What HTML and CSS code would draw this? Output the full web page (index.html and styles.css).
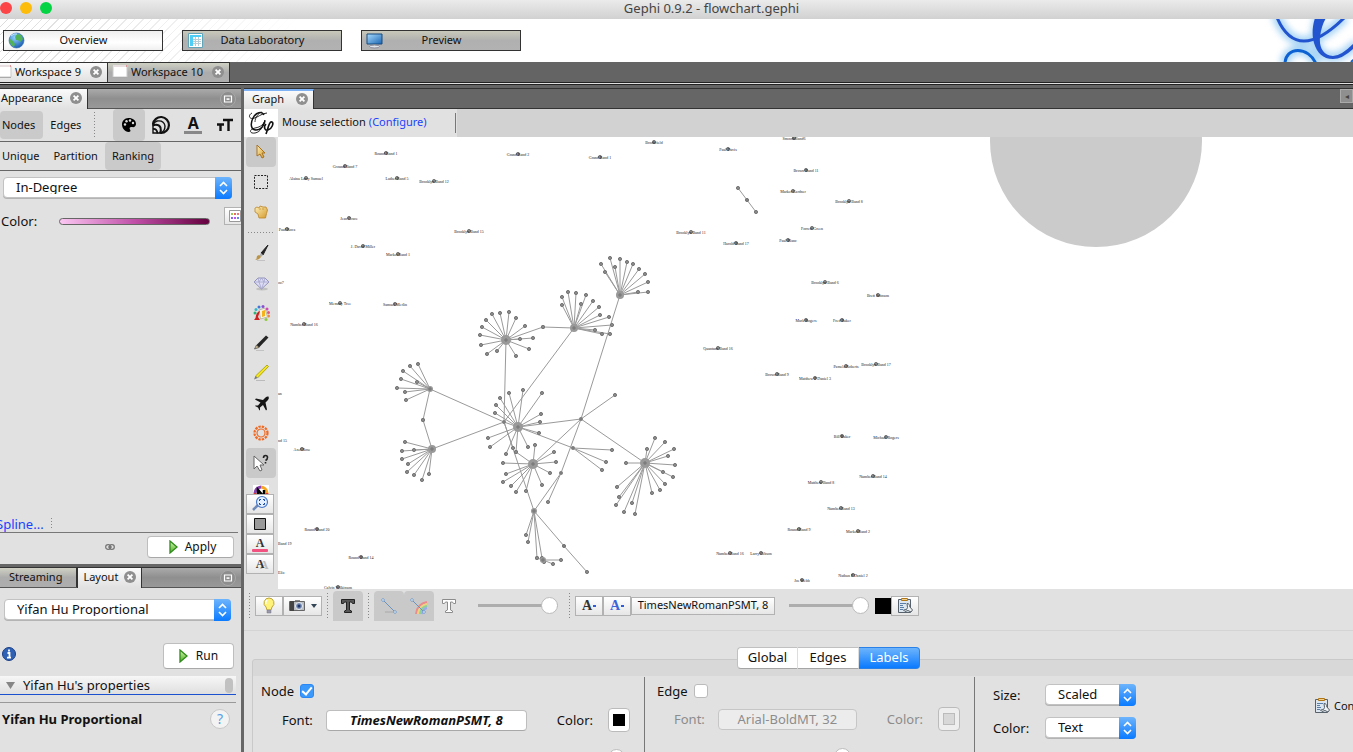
FILE: index.html
```html
<!DOCTYPE html>
<html lang="en">
<head>
<meta charset="utf-8">
<title>Gephi 0.9.2 - flowchart.gephi</title>
<link rel="stylesheet" href="styles.css">
</head>
<body>
<svg class="sprite" aria-hidden="true">
  <defs>
    <linearGradient id="gold" x1="0" y1="0" x2="1" y2="1"><stop offset="0" stop-color="#fff0b8"/><stop offset="1" stop-color="#d39a2c"/></linearGradient>
    <linearGradient id="green" x1="0" y1="0" x2="0" y2="1"><stop offset="0" stop-color="#d6f5b4"/><stop offset="1" stop-color="#4caf1e"/></linearGradient>
    <radialGradient id="globe" cx=".4" cy=".3" r=".8"><stop offset="0" stop-color="#8fd3ff"/><stop offset="1" stop-color="#0f4fa8"/></radialGradient>
    <linearGradient id="screen" x1="0" y1="0" x2="1" y2="1"><stop offset="0" stop-color="#a9dcff"/><stop offset="1" stop-color="#1b66b3"/></linearGradient>
  </defs>
  <symbol id="close" viewBox="0 0 12 12"><circle cx="6" cy="6" r="6" fill="#8f8f8f"/><path d="M3.6 3.6l4.8 4.8M8.4 3.6L3.6 8.4" stroke="#fff" stroke-width="1.8"/></symbol>
  <symbol id="minimize" viewBox="0 0 16 16"><circle cx="8" cy="8" r="7.5" fill="#8d8d8d" stroke="#a8a8a8"/><path d="M4.5 5h7v6h-7z" fill="none" stroke="#fff" stroke-width="1.2"/><path d="M6.5 7.3h3v1.6h-3z" fill="#fff"/></symbol>
  <symbol id="sheet" viewBox="0 0 16 14"><path d="M1 1h14v11H1z" fill="#fff" stroke="#c9c9c9"/><path d="M1 1h14" stroke="#e8e0e0" stroke-width="2"/><path d="M14 1h1" stroke="#c55" stroke-width="1"/><path d="M1 12.5h14" stroke="#aaa"/></symbol>
  <symbol id="play" viewBox="0 0 9 14"><path d="M1 1v12l7-6z" fill="url(#green)" stroke="#2e8b1a" stroke-width="1.3"/></symbol>
  <symbol id="stepper" viewBox="0 0 17 21"><path d="M5 8.5L8.5 5 12 8.5M5 12.5L8.5 16 12 12.5" fill="none" stroke="#fff" stroke-width="1.6"/></symbol>
  <symbol id="clip" viewBox="0 0 17 17"><path d="M1.500 2.500h12v13h-12z" fill="#dbe6f0" stroke="#56616b"/><path d="M3 6.500h6M3 8.500h3M3 10.500h4M3 12.500h3" stroke="#587da6"/><path d="M4.500 3.500v-2h6v2z" fill="#f3d18c" stroke="#b07616"/><path d="M10 6.500c2 0 3 1.500 2.500 3l3 3.500-1.500 2-3-1.500-3 1-1.500-1.500 3-.5 1-2z" fill="#eef2f5" stroke="#555e66"/></symbol>
</svg>

<div class="app">
  <header class="titlebar">
    <span class="lights"><i class="light red"></i><i class="light amber"></i><i class="light lime"></i></span>
    <h1>Gephi 0.9.2 - flowchart.gephi</h1>
  </header>

  <nav class="banner">
    <button class="view current"><svg width="17" height="17" viewBox="0 0 17 17"><circle cx="8.500" cy="8.500" r="7.500" fill="url(#globe)" stroke="#2b6cae" stroke-width=".6"/><path d="M9 2l4 1 2 4-3 3-2-2-2 0-1-3zM2 7l3 2 2 3-1 3-3-2-1.500-4z" fill="#52b356"/><path d="M3 4q3-3 6-2" stroke="#c4e9ff" fill="none"/></svg><span>Overview</span></button>
    <button class="view"><svg width="17" height="17" viewBox="0 0 17 17"><path d="M1.500 1.500h14v14h-14z" fill="#fff" stroke="#62a4b8"/><path d="M3 3h11v2H3zM3 5h3v9H3z" fill="#4fcdf5"/><path d="M6 7.500h8M6 9.500h8M6 11.500h8M8.500 5v9M11.500 5v9" stroke="#b6cdd5"/></svg><span>Data Laboratory</span></button>
    <button class="view"><svg width="17" height="17" viewBox="0 0 17 17"><path d="M1 2h15v10H1z" fill="url(#screen)" stroke="#174c80"/><path d="M7 12h3v2H7z" fill="#788"/><ellipse cx="8.500" cy="14.500" rx="5" ry="1.500" fill="#dfe5ea" stroke="#889"/></svg><span>Preview</span></button>
    <svg class="brand" width="90" height="43" viewBox="0 0 90 43">
      <defs><filter id="glow" x="-30%" y="-50%" width="160%" height="200%"><feGaussianBlur stdDeviation="3"/></filter></defs>
      <g fill="none" stroke="#8ec8f2" stroke-width="10" filter="url(#glow)" opacity=".75"><path d="M13-4C20 14 30 22 41 22S66 14 82-2M57-4C48 20 52 38 70 38q10 0 24-14M22 46c0-20 28-20 31 0"/></g>
      <path d="M13-4C20 14 30 22 41 22S66 14 82-2" fill="none" stroke="#2354cf" stroke-width="3"/>
      <path d="M52-1C49 8 49 17 51 24 54 34 60 40 70 40q10 0 22-12l-2-3Q78 37 70 37C60 36 56 28 57 18 58 10 60 4 63-1z" fill="#2354cf"/>
      <path d="M22 45c0-18 24-18 31 0" fill="none" stroke="#0c62d3" stroke-width="3"/>
      <path d="M88 43q2-2 4-3" fill="none" stroke="#0c62d3" stroke-width="2"/>
    </svg>
  </nav>

  <nav class="workspaces">
    <button class="tab current first"><svg width="12" height="14" viewBox="4 0 12 14"><use href="#sheet" width="16" height="14"/></svg>Workspace 9<svg class="x" width="12" height="12"><use href="#close"/></svg></button>
    <button class="tab"><svg width="16" height="14"><use href="#sheet"/></svg>Workspace 10<svg class="x" width="12" height="12"><use href="#close"/></svg></button>
  </nav>

  <div class="main">
    <aside class="side">
      <section class="appearance">
        <div class="tabs">
          <button class="tab current">Appearance<svg class="x" width="12" height="12"><use href="#close"/></svg></button>
          <button class="mini" aria-label="Minimize Appearance"><svg width="16" height="16"><use href="#minimize"/></svg></button>
        </div>
        <div class="row kinds">
          <button class="flat on">Nodes</button><button class="flat">Edges</button>
          <i class="dots"></i>
          <button class="flat icon on" aria-label="Color"><svg width="16" height="16" viewBox="0 0 16 16"><path d="M7.500 1C3.500 1 1 4 1 7.500S4 15 7.500 15c2 0 2.500-1 1.500-2.500s0-3 2-2.500 4-.5 4-3C15 3.500 12 1 7.500 1z"/><g fill="#ddd"><circle cx="4" cy="7.500" r="1.200"/><circle cx="5.500" cy="4.300" r="1.200"/><circle cx="9" cy="3.500" r="1.200"/><circle cx="12" cy="6" r="1.200"/></g></svg></button>
          <button class="flat icon" aria-label="Size"><svg width="20" height="20" viewBox="0 0 20 20" fill="none" stroke="#111"><path d="M2 9A8 8 0 1 1 10 18" stroke-width="2.200"/><path d="M1.500 10.500q6-2 8 2 1 3-.5 6" stroke-width="2"/><path d="M2 14q4-.5 4.500 4.500" stroke-width="1.800"/><path d="M2 8v10h8" stroke-width="1.400"/><path d="M2 10q1-3 4-4 7-1 8 5 0 5-4 7" stroke-width="1.400"/></svg></button>
          <button class="flat icon letter" aria-label="Label Color">A</button>
          <button class="flat icon" aria-label="Label Size"><svg width="16" height="14" viewBox="0 0 16 14"><path d="M6 2h10M11.500 2v11M0 6.500h7M3.500 6.500V13" fill="none" stroke="#111" stroke-width="2.400"/></svg></button>
        </div>
        <div class="row modes">
          <button class="flat">Unique</button><button class="flat">Partition</button><button class="flat on">Ranking</button>
        </div>
        <div class="rank">
          <label class="combo"><select aria-label="Ranking attribute"><option>In-Degree</option></select><svg width="17" height="21"><use href="#stepper"/></svg></label>
          <div class="ramp"><span>Color:</span><i class="gradient"></i><button class="box palette" aria-label="Palette"><svg width="12" height="12" viewBox="0 0 12 12"><path d="M.5.5h11v11H.5z" fill="#fff" stroke="#999"/><path d="M2 3h2v2H2z" fill="#9c5"/><path d="M5 3h2v2H5z" fill="#e66"/><path d="M8 3h2v2H8z" fill="#e77"/><path d="M2 7h2v2H2z" fill="#86d"/><path d="M5 7h2v2H5z" fill="#b5e"/><path d="M8 7h2v2H8z" fill="#68e"/></svg></button></div>
        </div>
        <div class="spline"><a href="#spline">Spline...</a><i class="dots"></i></div>
        <div class="apply">
          <svg width="10" height="6" viewBox="0 0 10 6"><rect x=".7" y=".7" width="5" height="4.600" rx="2.300" fill="none" stroke="#777" stroke-width="1.300"/><rect x="4.300" y=".7" width="5" height="4.600" rx="2.300" fill="none" stroke="#777" stroke-width="1.300"/><path d="M3 3h4" stroke="#777"/></svg>
          <button class="push"><svg width="9" height="14"><use href="#play"/></svg>Apply</button>
        </div>
      </section>
      <section class="layout">
        <div class="tabs">
          <button class="tab stream">Streaming</button><button class="tab current lay">Layout<svg class="x" width="12" height="12"><use href="#close"/></svg></button>
          <button class="mini" aria-label="Minimize Layout"><svg width="16" height="16"><use href="#minimize"/></svg></button>
        </div>
        <label class="combo"><select aria-label="Layout algorithm"><option>Yifan Hu Proportional</option></select><svg width="17" height="21"><use href="#stepper"/></svg></label>
        <div class="runrow">
          <svg width="14" height="14" viewBox="0 0 14 14"><circle cx="7" cy="7" r="6.500" fill="#2f62b5" stroke="#1b3f86"/><path d="M7 2.500v2M5.500 6h2v4.500M5 10.700h4" stroke="#fff" stroke-width="1.800" fill="none"/></svg>
          <button class="push run"><svg width="9" height="14"><use href="#play"/></svg>Run</button>
        </div>
        <div class="props"><button class="prophead"><svg width="9" height="7" viewBox="0 0 9 7"><path d="M0 0h9L4.500 7z" fill="#868686"/></svg>Yifan Hu's properties</button><i class="thumb"></i></div>
        <div class="about"><strong>Yifan Hu Proportional</strong><button class="help" aria-label="Help">?</button></div>
      </section>
    </aside>

    <section class="graph">
      <div class="tabs dark">
        <button class="tab current">Graph<svg class="x" width="12" height="12"><use href="#close"/></svg></button>
        <button class="scroll" aria-label="Scroll tabs">◂</button>
      </div>
      <div class="selection">
        <svg class="gp" width="34" height="28" viewBox="0 0 34 28" fill="none" stroke="#111"><path d="M20 6C18 2 12 3 9 9s-2 12 3 12 8-5 9-9" stroke-width="1.500"/><path d="M8 4C4 6 5 10 9 9.500S18 4 23 4" stroke-width=".9"/><path d="M18 3c-4 1-7 6-7 10" stroke-width=".8"/><path d="M21 11c-2 6-4 12-10 13s-6-4 0-5 9-4 10-8" stroke-width=".9"/><path d="M22 15c-3 3-1 7 2 6 4-1 6-7 4-8-3-1-4 7-6 12" stroke-width="1.600"/></svg>
        <span>Mouse selection</span><a href="#configure">(Configure)</a><i class="bar"></i>
      </div>
      <div class="stage">
        <div class="tools">
          <div class="toollist">
            <button class="tool on" aria-label="Select"><svg width="10" height="16" viewBox="0 0 10 16"><path d="M1 1v11l3-2 2 4 2-1-2-4h3z" fill="url(#gold)" stroke="#a87321"/></svg></button>
            <button class="tool" aria-label="Rectangle selection"><svg width="16" height="16" viewBox="0 0 16 16"><path d="M1.500 1.500h13v13h-13z" fill="none" stroke="#222" stroke-dasharray="2 1.250"/></svg></button>
            <button class="tool" aria-label="Drag"><svg width="16" height="16" viewBox="0 0 16 16"><path d="M2 6V4l2-1 2 1 1-2 3 1 3 0 1.500 3-1 3.500-1 4.500H6l-1-4-3-2z" fill="url(#gold)" stroke="#bb8425" stroke-width=".8"/><path d="M7 4v2M10 4v2" stroke="#bb8425" stroke-width=".6"/></svg></button>
            <i class="hdots"></i>
            <button class="tool" aria-label="Painter"><svg width="18" height="18" viewBox="0 0 18 18"><path d="M5 16.500h8" stroke="#c2c2c2"/><path d="M16 1l-5 10-2-2z" fill="#222" stroke="#222"/><path d="M9 9l2 2-2 2-2-1z" fill="#aaa"/><path d="M7 11l2 2q-2 3-6 3 2-1 2-4z" fill="#bb9446"/></svg></button>
            <button class="tool" aria-label="Sizer"><svg width="17" height="17" viewBox="0 0 17 17"><ellipse cx="9" cy="14" rx="6" ry="1.500" fill="#aaa" opacity=".6"/><path d="M5 3h7l4 4-7.500 7L1 7z" fill="#dcdcf5" stroke="#9292ba"/><path d="M1 7h15M5 3l1 4 2.500 7L11 7l1-4M6 7l2.500-4L11 7" fill="none" stroke="#a4a4cc" stroke-width=".8"/></svg></button>
            <button class="tool" aria-label="Brush"><svg width="17" height="17" viewBox="0 0 17 17"><g stroke="none"><circle cx="2" cy="8" r="1.500" fill="#2db37a"/><circle cx="3" cy="4.500" r="1.500" fill="#35b7c9"/><circle cx="6" cy="2" r="1.500" fill="#4573d8"/><circle cx="10" cy="1.500" r="1.500" fill="#8a4fd0"/><circle cx="14" cy="4" r="1.500" fill="#d24bb7"/><circle cx="15.500" cy="7.500" r="1.500" fill="#e4557c"/><circle cx="15.500" cy="11" r="1.500" fill="#ea8a3c"/><circle cx="13" cy="14.500" r="1.500" fill="#8fc93c"/></g><path d="M6 5l6-2 2.500 9-7 2z" fill="#faf4de" stroke="#bba"/><path d="M9 6l3-1v6l-3 1z" fill="#f4b21e"/><path d="M7 6Q3 7 2.500 13L1 15h6l-2-3z" fill="#cf2020"/></svg></button>
            <button class="tool" aria-label="Node pencil"><svg width="18" height="18" viewBox="0 0 18 18"><path d="M4 16.500h8" stroke="#c2c2c2"/><path d="M4.500 11L14 1.500l2.500 2L7 13.500z" fill="#252525"/><path d="M4.500 11L7 13.500 2.500 15z" fill="#cdbd95" stroke="#333" stroke-width=".6"/></svg></button>
            <button class="tool" aria-label="Edge pencil"><svg width="18" height="18" viewBox="0 0 18 18"><path d="M4 16.500h9" stroke="#bbb"/><path d="M3.500 12L15 1l1.500 1.500L5.500 14z" fill="#f4e51c" stroke="#a39a0c" stroke-width=".8"/><path d="M3.500 12l2 2-3.500 1.500z" fill="#777"/></svg></button>
            <button class="tool" aria-label="Shortest path"><svg width="17" height="17" viewBox="0 0 17 17"><path d="M15.500 1.500q-1.500-.5-3 1L10 5 3 3.500 2 4.500 7.500 7.500 5 10.500 2.500 10.500 2 11l3 1.500L6.500 15.500l.5-.5V12.500L10 10l3 5.500 1-1L12.500 7.500 15 5q1.500-2 .5-3.500z" fill="#151515"/></svg></button>
            <button class="tool" aria-label="Heat map"><svg width="16" height="16" viewBox="0 0 16 16" fill="none" stroke="#f06a24"><circle cx="8" cy="8" r="6.500" stroke-width="2.200" stroke-dasharray="2.400 1"/><circle cx="8" cy="8" r="4" stroke-width="1.200"/></svg></button>
            <button class="tool on" aria-label="Edit"><svg width="18" height="18" viewBox="0 0 18 18"><path d="M2 2v13l3-3 3 5 2-1-2-5h4z" fill="#fff" stroke="#666"/><path d="M11.500 4q0-2.500 2-2.500T15.500 3.500 13.500 6.500M13.500 8v1.500" fill="none" stroke="#222" stroke-width="1.600"/></svg></button>
            <button class="tool" aria-label="Neighbours"><svg width="16" height="16" viewBox="0 0 16 16"><path d="M0 0h16v16H0z" fill="#fff"/><path d="M2 8a6.500 6.500 0 0 1 6-6" stroke="#8b3fb0" stroke-width="3" fill="none"/><path d="M8 2a6.500 6.500 0 0 1 6 6" stroke="#f5a623" stroke-width="3" fill="none"/><path d="M14 8a6 6 0 0 1-12 0" stroke="#d33" stroke-width="3" fill="none"/><path d="M5 12V5l6 7V5" stroke="#000" stroke-width="2.500" fill="none"/></svg></button>
          </div>
          <div class="boxes">
            <button class="box" aria-label="Center on graph"><svg width="18" height="18" viewBox="0 0 18 18"><path d="M7 10l-5 5" stroke="#6f8bb8" stroke-width="2.500"/><circle cx="11" cy="7" r="5.500" fill="#e4efff" stroke="#4878c9" stroke-width="1.200"/><path d="M8.500 6V4.500H10M12 4.500h1.500V6M13.500 8v1.500H12M10 9.500H8.500V8" fill="none" stroke="#1444a9"/></svg></button>
            <button class="box" aria-label="Reset colors"><svg width="12" height="12" viewBox="0 0 12 12"><path d="M.5.5h11v11H.5z" fill="#999" stroke="#111"/></svg></button>
            <button class="box ul" aria-label="Reset label colors">A</button>
            <button class="box sh" aria-label="Reset label visibility">A</button>
          </div>
        </div>
        <svg class="canvas" id="canvas" viewBox="278 137 1075 452" preserveAspectRatio="xMinYMin slice" role="img" aria-label="Graph"></svg>
      </div>

      <div class="vizbar">
        <i class="dots"></i>
        <div class="group"><button class="box bulb" aria-label="Background"><svg width="14" height="18" viewBox="0 0 14 18"><path d="M7 1a5 5 0 0 0-3 9l1 3h4l1-3a5 5 0 0 0-3-9z" fill="#fff27b" stroke="#c0a63a"/><path d="M5 3q-2 2-1 4" stroke="#fff" stroke-width="1.500" fill="none"/><path d="M5 13h4v3H5z" fill="#99a" stroke="#778" stroke-width=".5"/></svg></button><button class="box camera" aria-label="Screenshot"><svg width="16" height="13" viewBox="0 0 16 13"><path d="M.5 2.500h15v9H.5z" fill="#b9bdc2" stroke="#666"/><path d="M1 2h4v10H1z" fill="#444"/><path d="M6 1h5v1H6z" fill="#888"/><circle cx="10" cy="7" r="3.500" fill="#6f86b0" stroke="#eee"/><circle cx="10" cy="7" r="1.500" fill="#203467"/></svg><span class="caret"></span></button></div>
        <i class="dots"></i>
        <button class="sq on" aria-label="Node labels"><svg width="16" height="16" viewBox="0 0 16 16"><path d="M1.500 1.500h13v4h-2l-1-1.500h-2v8l2 1v1.500h-7V13l2-1V4h-2l-1 1.500h-2z" fill="#555" stroke="#222"/></svg></button>
        <i class="dots"></i>
        <div class="group"><button class="sq on" aria-label="Show edges"><svg width="18" height="18" viewBox="0 0 18 18"><path d="M5 15h9" stroke="#b9b9b9" stroke-width="2"/><path d="M3 3l12 12" stroke="#6b93bd"/><circle cx="3" cy="3" r="1.300" fill="#fff" stroke="#5f8fc3" stroke-width=".8"/><circle cx="15" cy="15" r="1.300" fill="#fff" stroke="#5f8fc3" stroke-width=".8"/></svg></button><button class="sq on" aria-label="Edge color"><svg width="18" height="18" viewBox="0 0 18 18" fill="none"><path d="M6 17Q7 7 17 5" stroke="#ec8b8b" stroke-width="2"/><path d="M8 17Q9 9 17 7" stroke="#ecd480" stroke-width="2"/><path d="M10 17q1-7 7-8" stroke="#8fcf9c" stroke-width="2"/><path d="M12 17q1-5 5-6" stroke="#9aa9ec" stroke-width="2"/><path d="M2 3l12 12" stroke="#6b93bd"/><circle cx="2" cy="3" r="1.300" fill="#fff" stroke="#5f8fc3" stroke-width=".8"/><circle cx="14" cy="15" r="1.300" fill="#fff" stroke="#5f8fc3" stroke-width=".8"/></svg></button><button class="sq" aria-label="Edge labels"><svg width="16" height="16" viewBox="0 0 16 16"><path d="M1.500 1.500h13v4h-2l-1-1.500h-2v8l2 1v1.500h-7V13l2-1V4h-2l-1 1.500h-2z" fill="#fff" stroke="#8c8c8c"/></svg></button></div>
        <input class="slide one" type="range" min="0" max="100" value="100" aria-label="Edge weight scale">
        <i class="dots"></i>
        <div class="group fonts"><button class="box a">A<i class="tick"></i></button><button class="box a blue">A<i class="tick"></i></button><button class="box face">TimesNewRomanPSMT, 8</button></div>
        <input class="slide" type="range" min="0" max="100" value="100" aria-label="Font size scale">
        <div class="group"><button class="ink" aria-label="Label color"></button><button class="box conf" aria-label="Attributes"><svg width="17" height="17"><use href="#clip"/></svg></button></div>
      </div>

      <div class="settings">
        <div class="pane">
          <div class="segments"><button>Global</button><button>Edges</button><button class="on">Labels</button></div>
          <div class="cols">
            <div class="col node">
              <label class="head">Node<input type="checkbox" checked></label>
              <div class="line"><span>Font:</span><button class="push font">TimesNewRomanPSMT, 8</button><span>Color:</span><button class="swatch" aria-label="Node label color"><i></i></button></div>
              <input class="slide peek" type="range" value="100" aria-label="Node label size">
            </div>
            <div class="col edge">
              <label class="head">Edge<input type="checkbox"></label>
              <div class="line"><span>Font:</span><button class="push font" disabled>Arial-BoldMT, 32</button><span>Color:</span><button class="swatch" disabled aria-label="Edge label color"><i></i></button></div>
              <input class="slide peek" type="range" value="100" aria-label="Edge label size">
            </div>
            <div class="col size">
              <label class="pick"><span>Size:</span><span class="combo"><select><option>Scaled</option></select><svg width="17" height="21"><use href="#stepper"/></svg></span></label>
              <label class="pick"><span>Color:</span><span class="combo"><select><option>Text</option></select><svg width="17" height="21"><use href="#stepper"/></svg></span></label>
            </div>
            <button class="configure"><svg width="17" height="17"><use href="#clip"/></svg>Configure...</button>
          </div>
        </div>
      </div>
    </section>
  </div>
</div>
<script src="graph.js"></script>
</body>
</html>
```
FILE: styles.css
```css
* { box-sizing: border-box; }
body { margin: 0; font: 11px/14px "Noto Sans", "Open Sans", sans-serif; color: #111; background: #e1e1e1; }
button, select, input { font: inherit; color: inherit; margin: 0; padding: 0; border: 0; background: none; }
button { display: flex; align-items: center; justify-content: center; white-space: nowrap; flex: none; }
svg { flex: none; display: block; }
a { color: #1a41ff; text-decoration: none; }
.sprite { position: absolute; width: 0; height: 0; }
.app { height: 100vh; display: flex; flex-direction: column; overflow: hidden; }

.titlebar { height: 19px; flex: none; display: flex; align-items: center; background: linear-gradient(#ebebeb, #d1d1d1); overflow: hidden; }
.titlebar h1 { margin: 0 -70px 0 0; flex: 1; text-align: center; font: 13px/16px "Noto Sans", sans-serif; color: #444; padding: 0 52px 4px 0; }
.lights { display: flex; gap: 8px; width: 52px; flex: none; }
.light { width: 12px; height: 12px; flex: none; border-radius: 50%; margin-top: -3px; }
.red { background: #fc4546; }
.amber { background: #fdbc0a; }
.lime { background: #04d344; }

.banner { height: 43px; flex: none; display: flex; align-items: center; gap: 19px; padding-left: 3px; background: linear-gradient(90deg, transparent, #fff 300px), repeating-linear-gradient(135deg, #fff 0 5px, #dcdcdc 5px 6px); }
.view { width: 160px; height: 21px; border: 1px solid #333; background: linear-gradient(#c8c9ba, #b0b0b0 50%, #b2b2b2); justify-content: flex-start; padding-left: 4px; }
.view.current { background: linear-gradient(#eee, #fff 60%, #f0f0f0); }
.view span { flex: 1; padding: 0 20px 2px 0; }
.brand { margin-left: auto; }

.workspaces { display: flex; flex: none; height: 26px; background: linear-gradient(#646464 20px, #222 20px 21px, #e0e0e0 21px 22px, #222 22px 23px, #646464 23px); }
.tab { gap: 7px; padding: 0 8px 0 4px; background: linear-gradient(#d0d1c4, #acacac 50%, #aeaeae); border-top: 1px solid #333; border-right: 1px solid #333; }
.tab.current { background: linear-gradient(#fafafa, #e1e1e1); }
.tab .x { margin-left: 1px; }
.workspaces .tab { height: 20px; gap: 3px; padding: 0 5px 1px 4px; }
.workspaces .x { margin-left: 6px; }
.workspaces .first { padding: 0 5px 1px 0; }

.main { flex: 1; min-height: 0; display: flex; }
.side { width: 244px; flex: none; display: flex; flex-direction: column; border-right: 3px solid #666; overflow: hidden; }
.tabs { height: 21px; flex: none; display: flex; border-bottom: 1px solid #555; background: linear-gradient(#aaa, #8f8f8f 50%, #999); border-top: 1px solid #333; }
.tabs .tab { border-top: 0; height: 20px; }
.tabs .tab:not(.current) { height: 19px; }
.tabs .mini { margin: 0 5px 0 auto; }
.appearance { flex: 1; min-height: 0; display: flex; flex-direction: column; border-bottom: 3px solid #666; }
.appearance .tabs .tab { padding: 0 5px 2px 1px; gap: 6px; }
.row { display: flex; flex: none; border-bottom: 1px solid #666; align-items: center; }
.kinds { height: 33px; }
.modes { height: 29px; }
.flat { padding: 0 7px; height: 28px; border-radius: 4px; }
.kinds .flat:first-child { padding: 0 8px 0 2px; }
.flat.on { background: #cacaca; }
.modes .flat { padding: 0 7px; }
.modes .flat:first-child { padding-left: 2px; }
.dots { width: 1px; height: 26px; flex: none; background: repeating-linear-gradient(#888 0 1px, transparent 1px 3px); }
.kinds .dots { margin: 0 18px 0 6px; }
.flat.icon { width: 32px; height: 32px; padding: 0; }
.flat.letter { font: bold 16px/15px "Noto Sans", sans-serif; flex-direction: column; }
.letter::after { content: ""; width: 18px; height: 3px; background: #888; }
.rank { flex: 1; padding: 6px 0 0 3px; }
.combo { position: relative; display: block; height: 21px; }
.combo select { appearance: none; display: block; width: 100%; height: 21px; font-size: 13px; border: 1px solid #c2c2c2; border-radius: 4px; background: #fff; padding: 0 20px 2px 12px; box-shadow: 0 1px 0 #b4b4b4; }
.combo svg { position: absolute; right: 0; top: 0; height: 22px; background: linear-gradient(#6db4fc, #0a7aff); border-radius: 0 4px 4px 0; pointer-events: none; }
.rank .combo { width: 229px; }
.ramp { display: flex; align-items: center; font-size: 13px; margin: 7px 0 0 -2px; gap: 22px; }
.ramp span { width: 42px; height: 32px; line-height: 12px; padding-top: 10px; }
.gradient { width: 151px; height: 7px; flex: none; border: 1px solid #666; border-radius: 4px; background: linear-gradient(90deg, #fbc7f2, #c050a8 50%, #66003f); }
.palette { width: 22px; height: 18px; margin: -10px 0 0 -8px; }
.box { border: 1px solid #b2b2b2; background: linear-gradient(#fff, #e6e6e6); }
.spline { display: flex; align-items: center; gap: 7px; font-size: 13px; margin-left: -4px; height: 16px; flex: none; }
.spline .dots { height: 12px; }
.apply { height: 32px; margin-right: 3px; flex: none; display: flex; align-items: center; justify-content: flex-end; gap: 32px; border-top: 1px solid #777; padding: 0 4px 3px 0; }
.push { height: 22px; border-radius: 4px; border: 1px solid #bebebe; border-bottom-color: #a8a8a8; background: #fff; gap: 7px; width: 87px; }
.apply .push { padding-left: 4px; font-size: 12px; }
.run { width: 71px; height: 26px; gap: 8px; font-size: 12px; }
.layout { height: 185px; flex: none; overflow: hidden; }
.layout .tabs .tab { padding: 0 14px 2px 9px; }
.layout .tabs .lay { padding: 0 5px 2px; border-left: 1px solid #333; gap: 5px; }
.layout > .combo { margin: 11px 10px 0 4px; }
.runrow { display: flex; justify-content: space-between; align-items: center; padding: 23px 7px 7px 2px; }
.runrow > svg { margin-top: -4px; }
.props { display: flex; align-items: center; height: 19px; margin-right: 5px; border-bottom: 1px solid #1b50cf; background: linear-gradient(#f7f7f7, #dfdfdf); }
.prophead { flex: 1; justify-content: flex-start; font-size: 13px; padding-left: 6px; gap: 8px; }
.thumb { width: 8px; height: 15px; border-radius: 4px; background: #c1c1c1; margin: 0 3px; }
.about { margin: 7px 5px 0 0; padding: 6px 6px 0 2px; display: flex; justify-content: space-between; align-items: center; border-top: 1px solid #999; }
.about strong { font-size: 13px; }
.help { width: 20px; height: 20px; border-radius: 50%; background: #f3f3f3; border: 1px solid #c8c8c8; color: #5a9ee8; font-size: 14px; }

.graph { flex: 1; min-width: 0; display: flex; flex-direction: column; }
.tabs.dark { background: #666; border-bottom-color: #333; justify-content: space-between; }
.dark .tab.current { border-top: 2px solid #7fb2f5; padding: 0 5px 2px 8px; gap: 11px; }
.scroll { width: 13px; height: 14px; border: 1px solid #aaa; background: #8f8f8f; color: #444; font-size: 8px; }
.selection { height: 28px; flex: none; display: flex; align-items: center; background: linear-gradient(90deg, #e1e1e1 213px, #d2d2d2 213px); }
.selection .gp { background: #fff; }
.selection span { margin: 0 3px 2px 4px; }
.selection a { margin-bottom: 2px; }
.bar { width: 1px; height: 20px; background: #777; margin-left: 28px; }
.stage { flex: 1; min-height: 0; display: flex; }
.tools { width: 34px; flex: none; padding: 0 2px 15px; display: flex; flex-direction: column; }
.toollist { flex: 1; min-height: 0; overflow: hidden; }
.tool { width: 30px; height: 30px; border-radius: 4px; }
.on.tool, .sq.on { background: #c9c9c9; }
.hdots { display: block; height: 1px; margin: 5px 2px; background: repeating-linear-gradient(90deg, #888 0 1px, transparent 1px 3px); }
.boxes .box { width: 28px; height: 20px; }
.box.ul, .box.sh, .box.a { font: bold 12px/12px "Liberation Serif", serif; color: #333; }
.ul { flex-direction: column; }
.ul::after { content: ""; width: 16px; height: 3px; border-radius: 1px; background: #f2527f; }
.sh { text-shadow: 4px 1px #bbb; }
.canvas { flex: 1; min-width: 0; height: 100%; background: #fff; }
.canvas line { stroke: #9a9a9a; stroke-width: 1px; }
.canvas circle { fill: #8b8b8b; stroke: #777; stroke-width: 1px; }
.canvas .halo { fill: #cbcbcb; stroke: none; }
.canvas .hub { fill: #999; stroke: none; }
.canvas text { font: 4px "Liberation Serif", serif; fill: #222; text-anchor: middle; }
.canvas .cut { text-anchor: start; }

.vizbar { height: 42px; flex: none; display: flex; align-items: center; padding: 0 0 8px 5px; gap: 5px; border-bottom: 1px solid #d4d4d4; }
.group { display: flex; align-items: center; }
.vizbar .box { height: 20px; width: 28px; }
.vizbar .camera { width: 39px; gap: 6px; }
.caret { border: 3px solid transparent; border-top: 4px solid #345; border-bottom: 0; }
.sq { width: 30px; height: 30px; border-radius: 4px 4px 0 0; }
.vizbar .a { gap: 1px; font-size: 14px; }
.vizbar .a.blue { color: #3d63d8; }
.tick { width: 3px; height: 2px; background: #2d5be0; }
.vizbar .face { width: 144px; height: 18px; padding-bottom: 1px; }
.slide { appearance: none; width: 80px; height: 17px; background: linear-gradient(#adadad, #adadad) center / 100% 3px no-repeat; }
.slide::-webkit-slider-thumb { appearance: none; width: 17px; height: 17px; border-radius: 50%; background: #fff; border: 1px solid #bbb; }
.slide.one { margin: 0 6px 0 9px; }
.fonts { margin-right: 9px; }
.ink { width: 16px; height: 16px; background: #000; margin-left: 1px; }

.settings { height: 121px; flex: none; overflow: hidden; padding: 28px 0 0 8px; }
.pane { margin-right: -52px; border: 1px solid #c9c9c9; border-radius: 3px; background: linear-gradient(#d8d8d8 16px, #e1e1e1 16px); }
.segments { display: flex; justify-content: center; margin-top: -13px; height: 22px; font-size: 13px; }
.segments button { width: 61px; padding-bottom: 2px; border: 1px solid #c0c0c0; border-bottom-color: #a5a5a5; border-right-color: #ddd; background: #fff; }
.segments button:first-child { border-radius: 4px 0 0 4px; }
.segments button + button { border-left: 0; }
.segments .on { border-color: #2a82e8; border-radius: 0 4px 4px 0; background: linear-gradient(#6db4fc, #0a7aff); color: #fff; }
.cols { display: flex; font-size: 13px; line-height: 16px; margin-top: 8px; height: 93px; align-items: flex-start; }
.col { height: 93px; flex: none; padding: 6px 0 0 12px; border-left: 1px solid #777; }
.node { width: 391px; border-left: 0; padding-left: 8px; }
.edge { width: 330px; }
.head { display: flex; align-items: center; gap: 6px; }
.head input { appearance: none; width: 14px; height: 14px; border-radius: 3px; border: 1px solid #bbb; background: #fff; }
.head input:checked { border-color: #2a88f5; background: #3b99fc; display: grid; place-items: center; }
.head input:checked::after { content: ""; width: 4px; height: 8px; margin-top: -2px; border: solid #fff; border-width: 0 2px 2px 0; transform: rotate(40deg); }
.line { display: flex; align-items: center; margin: 9px 0 0 21px; gap: 13px; }
.line .font { width: 201px; height: 21px; margin-right: 17px; padding-bottom: 1px; font-weight: bold; font-style: italic; }
.line .swatch { width: 22px; height: 24px; margin-left: 2px; border: 1px solid #bbb; border-radius: 4px; background: #fff; }
.swatch i { width: 12px; height: 12px; background: #000; }
.edge .line { color: #8c8c8c; margin: 8px 0 1px 17px; }
.edge .line .font { width: 139px; font-weight: normal; font-style: normal; background: #ececec; border-color: #c6c6c6; color: #8c8c8c; }
.edge .swatch { background: #eee; }
.edge .swatch i { background: #d8d8d8; border: 1px solid #bbb; }
.peek { display: block; width: 200px; margin: 17px 0 0 164px; background: none; }
.edge .peek { width: 60px; margin-left: 134px; }
.size { width: 340px; padding: 7px 0 0 18px; }
.pick { display: flex; align-items: center; margin-bottom: 12px; }
.pick > span:first-child { width: 52px; }
.pick .combo { width: 91px; }
.configure { gap: 3px; margin-top: 20px; font-size: 11px; }
```
FILE: graph.js
```js
const SVG = "http://www.w3.org/2000/svg";
const canvas = document.getElementById("canvas");

const clusters = [
  { hub: [506, 340], r: 5, to: [[509,312],[500,313],[492,314],[516,318],[486,320],[482,327],[525,326],[480,335],[481,345],[487,354],[497,351],[516,356],[529,349],[520,339],[533,338],[543,327]] },
  { hub: [574, 328], r: 4, to: [[568,292],[562,297],[576,293],[586,295],[562,305],[581,304],[593,301],[599,307],[600,315],[609,317],[612,325],[595,330],[602,334],[610,334],[543,327]] },
  { hub: [620, 295], r: 4, to: [[601,264],[610,258],[620,259],[605,272],[615,267],[627,262],[633,264],[639,269],[645,274],[648,282],[638,292],[648,292]] },
  { hub: [430, 389], r: 3, to: [[418,364],[410,366],[403,371],[401,379],[417,382],[397,388],[405,392],[406,400],[423,420]] },
  { hub: [432, 449], r: 4, to: [[405,442],[402,451],[414,450],[402,459],[408,464],[407,472],[414,475],[429,474],[422,480],[423,420]] },
  { hub: [518, 427], r: 5, to: [[523,390],[509,393],[500,398],[496,405],[495,413],[488,438],[490,447],[506,454],[516,452],[528,447],[542,393],[541,414],[540,422],[539,433]] },
  { hub: [645, 463], r: 5, to: [[647,449],[655,438],[665,442],[674,449],[668,456],[675,465],[663,472],[673,477],[665,484],[660,490],[652,493],[626,463],[617,487],[619,497],[616,505],[632,503],[624,512],[635,514]] },
  { hub: [533, 464], r: 5, to: [[535,445],[503,463],[506,474],[503,482],[511,486],[516,492],[526,491],[554,452],[556,462],[550,473],[542,485],[516,452]] },
  { hub: [573, 448], r: 2, to: [[612,450],[606,462],[602,470]] },
  { hub: [581, 419], r: 2, to: [[615,395]] },
  { hub: [561, 473], r: 2, to: [[548,502]] },
  { hub: [534, 511], r: 3, to: [[526,535],[528,542],[537,558],[542,558],[564,546]] },
  { hub: [564, 546], r: 1, to: [[587,572]] },
  { hub: [543, 560], r: 3, to: [[561,560],[553,564],[537,558],[544,562]] },
  { hub: [504, 422], r: 2, to: [[513,448]] },
  { hub: [747, 200], r: 1, to: [[738,188],[756,212],[747,200]] }
];

const bridges = [
  [504,422,430,389],[504,422,432,449],[504,422,506,340],[504,422,574,328],[504,422,534,511],[504,422,518,427],
  [581,419,620,295],[581,419,645,463],[581,419,533,464],[581,419,561,473],[581,419,518,427],[518,427,573,448],[561,473,534,511]
];

const singles = [
  [654,142,"Brookfield"],[794,138,"SmoothBand6"],[728,149,"Paul Davis"],[386,153,"Round Band 1"],[518,154,"Grand Band 2"],
  [600,157,"Grand Band 1"],[345,166,"Ground Band 7"],[306,178,"Alaina Larry Samuel"],[397,178,"Luther Band 5"],[434,181,"Brooklyn Band 12"],
  [806,170,"Brown Band 11"],[793,191,"Market Gardner"],[849,201,"Brooklyn Band 8"],[349,218,"Jean Grace"],[287,229,"Paul Roca"],
  [363,246,"J. David Miller"],[398,254,"Market Band 1"],[469,231,"Brooklyn Band 15"],[691,232,"Brooklyn Band 11"],[736,243,"Harold Band 17"],
  [788,240,"Paul Blanc"],[812,228,"Forrest Green"],[825,282,"Brooklyn Band 6"],[878,295,"Brett Johnson"],[806,320,"Mark Rogers"],
  [842,320,"Fred Baker"],[718,348,"Quantum Band 16"],[846,366,"Pamela Roberts"],[876,364,"Brooklyn Band 17"],[777,374,"Brown Band 9"],
  [815,378,"Matthew P Daniel 3"],[842,436,"Bill Baker"],[886,437,"Michael Rogers"],[873,476,"Number Band 14"],[821,482,"Matthew Band 8"],
  [841,508,"Number Band 13"],[799,529,"Round Band 9"],[858,531,"Market Band 2"],[730,553,"Number Band 16"],[761,553,"Larry Gibson"],
  [853,575,"Nathan P Daniel 2"],[802,580,"Joe Webb"],[340,303,"Memory Tree"],[395,304,"Samuel Merlin"],[304,324,"Number Band 16"],
  [302,449,"Axel Rose"],[317,529,"Round Band 20"],[361,557,"Round Band 14"],[338,587,"Calvin Wilkinson"]
];

const fragments = [[278,284,"oz7"],[278,395,"an"],[278,442,"nd 15"],[278,545,"Band 19"],[278,574,"Eliz"]];

function draw(tag, attrs, text) {
  const el = document.createElementNS(SVG, tag);
  for (const key in attrs) el.setAttribute(key, attrs[key]);
  if (text) el.textContent = text;
  canvas.appendChild(el);
}

draw("circle", { cx: 1096, cy: 141, r: 106, class: "halo" });
bridges.forEach(([x1, y1, x2, y2]) => draw("line", { x1, y1, x2, y2 }));
clusters.forEach(({ hub: [x1, y1], r, to }) => {
  to.forEach(([x2, y2]) => draw("line", { x1, y1, x2, y2 }));
  to.forEach(([cx, cy]) => draw("circle", { cx, cy, r: 1.6 }));
  draw("circle", { cx: x1, cy: y1, r, class: "hub" });
  draw("circle", { cx: x1, cy: y1, r: 1.2 });
});
singles.forEach(([cx, cy, name]) => {
  draw("circle", { cx, cy, r: 1.6 });
  draw("text", { x: cx, y: cy + 2 }, name);
});
fragments.forEach(([x, y, name]) => draw("text", { x, y, class: "cut" }, name));
```
